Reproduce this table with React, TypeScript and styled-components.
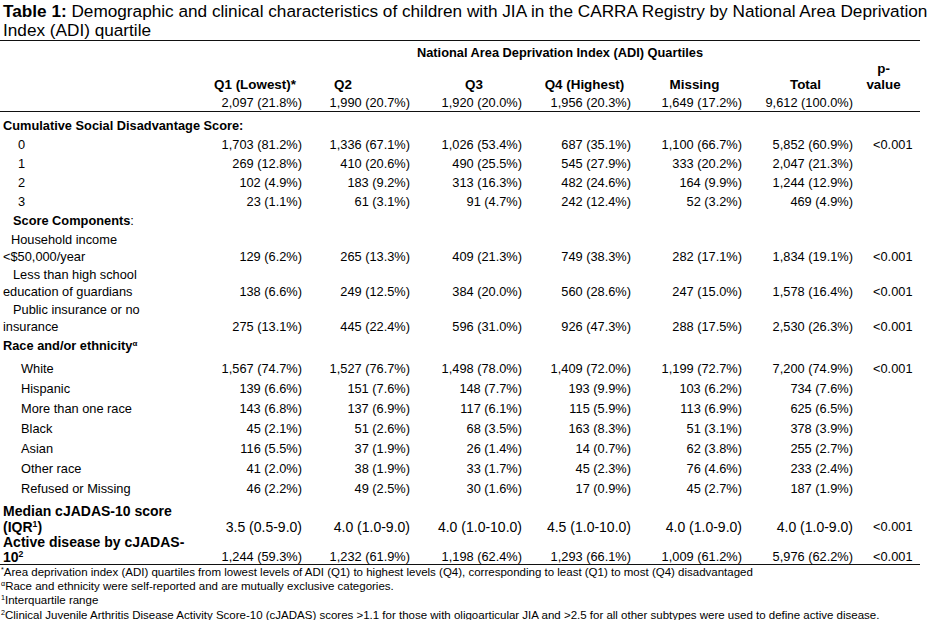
import React from "react";
import styled, { createGlobalStyle } from "styled-components";

const GlobalStyle = createGlobalStyle`
  html, body { margin: 0; padding: 0; background: #fff; }
  body { font-family: "Liberation Sans", Arial, Helvetica, sans-serif; color: #000; }
`;

const Page = styled.div`
  width: 936px;
  padding-top: 2px;
`;

const Title = styled.div`
  font-size: 17.2px;
  line-height: 18.5px;
  padding-left: 3px;
  margin-bottom: 1px;
  white-space: nowrap;
`;

const Table = styled.table`
  border-collapse: collapse;
  table-layout: fixed;
  width: 920px;
  font-size: 12.8px;
  border-top: 1px solid #111;
`;

const Sup = styled.sup`
  font-size: 0.62em;
  line-height: 0;
  vertical-align: 0.55em;
`;

const Row = styled.tr<{ $pt: number; $pb: number; $lh: number; $border?: boolean }>`
  & > td, & > th {
    padding-top: ${(p) => p.$pt}px;
    padding-bottom: ${(p) => p.$pb}px;
    line-height: ${(p) => p.$lh}px;
    vertical-align: bottom;
  }
  ${(p) => (p.$border ? "border-bottom: 1px solid #111;" : "")}
`;

const HeadCell = styled.th<{ $pr?: number }>`
  font-weight: bold;
  text-align: center;
  padding-left: 0;
  padding-right: ${(p) => p.$pr ?? 0}px;
`;

const ColHead = styled(HeadCell)`
  font-size: 13.4px;
`;

const Label = styled.td<{ $indent?: number; $bold?: boolean; $size?: number; $first?: number }>`
  padding-left: ${(p) => p.$indent ?? 3}px;
  padding-right: 0;
  text-align: left;
  font-weight: ${(p) => (p.$bold ? "bold" : "normal")};
  ${(p) => (p.$size ? `font-size: ${p.$size}px;` : "")}
  ${(p) => (p.$first ? `text-indent: ${p.$first}px;` : "")}
  white-space: nowrap;
`;

const Value = styled.td<{ $size?: number }>`
  text-align: right;
  padding-right: 8px;
  padding-left: 0;
  white-space: nowrap;
  ${(p) => (p.$size ? `font-size: ${p.$size}px;` : "")}
`;

const PValue = styled.td`
  text-align: left;
  padding-left: 12px;
  padding-right: 0;
  white-space: nowrap;
`;

const Light = styled.span`
  font-weight: normal;
`;

const Notes = styled.div`
  font-size: 11.5px;
  line-height: 14.2px;
  padding-left: 1px;
  white-space: nowrap;
`;

type Kind = "section" | "item" | "wrap" | "race" | "raceItem" | "median" | "active" | "first";

interface DataRow {
  kind: Kind;
  label: React.ReactNode;
  values?: string[];
  p?: string;
  indent?: number;
  first?: number;
}

const metrics: Record<Kind, { pt: number; pb: number; lh: number }> = {
  first: { pt: 6, pb: 1, lh: 16 },
  section: { pt: 1, pb: 1, lh: 17 },
  item: { pt: 1, pb: 1, lh: 17 },
  wrap: { pt: 1, pb: 0, lh: 17 },
  race: { pt: 2, pb: 5, lh: 17 },
  raceItem: { pt: 2, pb: 2, lh: 16 },
  median: { pt: 4, pb: 0, lh: 16 },
  active: { pt: 0, pb: 0, lh: 14.5 },
};

const rows: DataRow[] = [
  { kind: "first", label: "Cumulative Social Disadvantage Score:" },
  { kind: "item", label: "0", indent: 18, values: ["1,703 (81.2%)", "1,336 (67.1%)", "1,026 (53.4%)", "687 (35.1%)", "1,100 (66.7%)", "5,852 (60.9%)"], p: "<0.001" },
  { kind: "item", label: "1", indent: 18, values: ["269 (12.8%)", "410 (20.6%)", "490 (25.5%)", "545 (27.9%)", "333 (20.2%)", "2,047 (21.3%)"] },
  { kind: "item", label: "2", indent: 18, values: ["102 (4.9%)", "183 (9.2%)", "313 (16.3%)", "482 (24.6%)", "164 (9.9%)", "1,244 (12.9%)"] },
  { kind: "item", label: "3", indent: 18, values: ["23 (1.1%)", "61 (3.1%)", "91 (4.7%)", "242 (12.4%)", "52 (3.2%)", "469 (4.9%)"] },
  { kind: "section", label: <>Score Components<Light>:</Light></>, indent: 13 },
  { kind: "wrap", label: <>Household income<br />&lt;$50,000/year</>, first: 8, values: ["129 (6.2%)", "265 (13.3%)", "409 (21.3%)", "749 (38.3%)", "282 (17.1%)", "1,834 (19.1%)"], p: "<0.001" },
  { kind: "wrap", label: <>Less than high school<br />education of guardians</>, first: 10, values: ["138 (6.6%)", "249 (12.5%)", "384 (20.0%)", "560 (28.6%)", "247 (15.0%)", "1,578 (16.4%)"], p: "<0.001" },
  { kind: "wrap", label: <>Public insurance or no<br />insurance</>, first: 10, values: ["275 (13.1%)", "445 (22.4%)", "596 (31.0%)", "926 (47.3%)", "288 (17.5%)", "2,530 (26.3%)"], p: "<0.001" },
  { kind: "race", label: <>Race and/or ethnicity<Sup>α</Sup></> },
  { kind: "raceItem", label: "White", indent: 21, values: ["1,567 (74.7%)", "1,527 (76.7%)", "1,498 (78.0%)", "1,409 (72.0%)", "1,199 (72.7%)", "7,200 (74.9%)"], p: "<0.001" },
  { kind: "raceItem", label: "Hispanic", indent: 21, values: ["139 (6.6%)", "151 (7.6%)", "148 (7.7%)", "193 (9.9%)", "103 (6.2%)", "734 (7.6%)"] },
  { kind: "raceItem", label: "More than one race", indent: 21, values: ["143 (6.8%)", "137 (6.9%)", "117 (6.1%)", "115 (5.9%)", "113 (6.9%)", "625 (6.5%)"] },
  { kind: "raceItem", label: "Black", indent: 21, values: ["45 (2.1%)", "51 (2.6%)", "68 (3.5%)", "163 (8.3%)", "51 (3.1%)", "378 (3.9%)"] },
  { kind: "raceItem", label: "Asian", indent: 21, values: ["116 (5.5%)", "37 (1.9%)", "26 (1.4%)", "14 (0.7%)", "62 (3.8%)", "255 (2.7%)"] },
  { kind: "raceItem", label: "Other race", indent: 21, values: ["41 (2.0%)", "38 (1.9%)", "33 (1.7%)", "45 (2.3%)", "76 (4.6%)", "233 (2.4%)"] },
  { kind: "raceItem", label: "Refused or Missing", indent: 21, values: ["46 (2.2%)", "49 (2.5%)", "30 (1.6%)", "17 (0.9%)", "45 (2.7%)", "187 (1.9%)"] },
  { kind: "median", label: <>Median cJADAS-10 score<br />(IQR<Sup>1</Sup>)</>, values: ["3.5 (0.5-9.0)", "4.0 (1.0-9.0)", "4.0 (1.0-10.0)", "4.5 (1.0-10.0)", "4.0 (1.0-9.0)", "4.0 (1.0-9.0)"], p: "<0.001" },
  { kind: "active", label: <>Active disease by cJADAS-<br />10<Sup>2</Sup></>, values: ["1,244 (59.3%)", "1,232 (61.9%)", "1,198 (62.4%)", "1,293 (66.1%)", "1,009 (61.2%)", "5,976 (62.2%)"], p: "<0.001" },
];

const boldKinds: Kind[] = ["first", "section", "race", "median", "active"];

const colWidths = [200, 110, 108, 112, 109, 111, 111, 59];

export default function App() {
  return (
    <Page>
      <GlobalStyle />
      <Title>
        <b>Table 1:</b> Demographic and clinical characteristics of children with JIA in the CARRA Registry by National Area Deprivation
        <br />
        Index (ADI) quartile
      </Title>
      <Table>
        <colgroup>
          {colWidths.map((w, i) => (
            <col key={i} style={{ width: w }} />
          ))}
        </colgroup>
        <thead>
          <Row $pt={4} $pb={0} $lh={16}>
            <th />
            <HeadCell colSpan={7}>National Area Deprivation Index (ADI) Quartiles</HeadCell>
          </Row>
          <Row $pt={0} $pb={0} $lh={15.5}>
            <th />
            <ColHead>Q1 (Lowest)*</ColHead>
            <ColHead $pr={42}>Q2</ColHead>
            <ColHead>Q3</ColHead>
            <ColHead>Q4 (Highest)</ColHead>
            <ColHead>Missing</ColHead>
            <ColHead>Total</ColHead>
            <ColHead $pr={14}>
              p-
              <br />
              value
            </ColHead>
          </Row>
          <Row $pt={3} $pb={0} $lh={16} $border>
            <td />
            {["2,097 (21.8%)", "1,990 (20.7%)", "1,920 (20.0%)", "1,956 (20.3%)", "1,649 (17.2%)", "9,612 (100.0%)"].map((v) => (
              <Value key={v}>{v}</Value>
            ))}
            <td />
          </Row>
        </thead>
        <tbody>
          {rows.map((r, i) => {
            const m = metrics[r.kind];
            const big = r.kind === "median" || r.kind === "active";
            return (
              <Row key={i} $pt={m.pt} $pb={m.pb} $lh={m.lh} $border={r.kind === "active"}>
                <Label
                  $indent={r.indent}
                  $first={r.first}
                  $bold={boldKinds.includes(r.kind)}
                  $size={big ? 14 : undefined}
                >
                  {r.label}
                </Label>
                {r.values
                  ? r.values.map((v, j) => (
                      <Value key={j} $size={r.kind === "median" ? 14 : undefined}>
                        {v}
                      </Value>
                    ))
                  : Array.from({ length: 6 }).map((_, j) => <td key={j} />)}
                <PValue>{r.p ?? ""}</PValue>
              </Row>
            );
          })}
        </tbody>
      </Table>
      <Notes>
        <div>
          <Sup>*</Sup>Area deprivation index (ADI) quartiles from lowest levels of ADI (Q1) to highest levels (Q4), corresponding to least (Q1) to most (Q4) disadvantaged
        </div>
        <div>
          <Sup>α</Sup>Race and ethnicity were self-reported and are mutually exclusive categories.
        </div>
        <div>
          <Sup>1</Sup>Interquartile range
        </div>
        <div>
          <Sup>2</Sup>Clinical Juvenile Arthritis Disease Activity Score-10 (cJADAS) scores &gt;1.1 for those with oligoarticular JIA and &gt;2.5 for all other subtypes were used to define active disease.
        </div>
      </Notes>
    </Page>
  );
}
